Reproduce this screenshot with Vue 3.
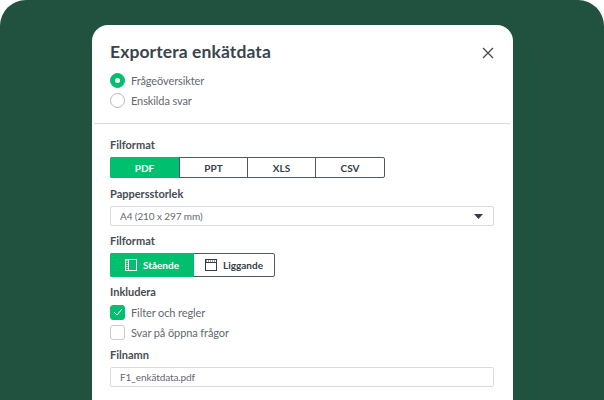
<script setup>
const formats = ['PDF', 'PPT', 'XLS', 'CSV']
</script>

<template>
  <div class="stage">
    <section class="card">
      <header class="head">
        <div class="title-row">
          <h1 class="title">Exportera enkätdata</h1>
          <svg class="close" width="12" height="12" viewBox="0 0 12 12"><path d="M1 1l10 10M11 1L1 11" stroke="#4a4f55" stroke-width="1.4" fill="none"/></svg>
        </div>
        <div class="radios">
          <div class="opt"><span class="radio on"><i></i></span><span>Frågeöversikter</span></div>
          <div class="opt"><span class="radio"></span><span>Enskilda svar</span></div>
        </div>
      </header>
      <div class="rule"></div>
      <div class="body">
        <div class="label l1">Filformat</div>
        <div class="seg">
          <div v-for="(f, i) in formats" :key="f" class="seg-item" :class="{ active: i === 0 }">{{ f }}</div>
        </div>
        <div class="label l2">Pappersstorlek</div>
        <div class="field select">
          <span>A4 (210 x 297 mm)</span>
          <svg width="9" height="5" viewBox="0 0 9 5"><path d="M0 0h9L4.500 5z" fill="#333e48"/></svg>
        </div>
        <div class="label l3">Filformat</div>
        <div class="seg seg2">
          <div class="seg-item active">
            <svg width="12" height="12" viewBox="0 0 12 12" fill="none" stroke="#fff" stroke-width="1"><rect x=".5" y=".5" width="11" height="11"/><path d="M3.500 .5v11"/><path d="M2 1v10" stroke-dasharray="1 1"/></svg>
            <span>Stående</span>
          </div>
          <div class="seg-item">
            <svg width="12" height="12" viewBox="0 0 12 12" fill="none" stroke="#333e48" stroke-width="1"><rect x=".5" y=".5" width="11" height="11"/><path d="M.5 3.500h11"/><path d="M1 2h10" stroke-dasharray="1 1"/></svg>
            <span>Liggande</span>
          </div>
        </div>
        <div class="label l4">Inkludera</div>
        <div class="checks">
          <div class="opt"><span class="check on"><svg width="10" height="8" viewBox="0 0 10 8"><path d="M1 4l3 3 5-6" stroke="#fff" stroke-width="1" fill="none"/></svg></span><span>Filter och regler</span></div>
          <div class="opt"><span class="check"></span><span>Svar på öppna frågor</span></div>
        </div>
        <div class="label l5">Filnamn</div>
        <div class="field name">F1_enkätdata.pdf</div>
      </div>
    </section>
  </div>
</template>

<style scoped>
.stage {
  width: 604px;
  height: 400px;
  box-sizing: border-box;
  padding: 25px 91px 0 92px;
  background: #21523f;
  border-radius: 26px 26px 0 0;
  overflow: hidden;
  font-family: "Lato", sans-serif;
  color: #333e48;
}
.card {
  background: #fff;
  height: 375px;
  border-radius: 16px 16px 0 0;
}
.head {
  height: 98px;
  box-sizing: border-box;
  padding: 15px 19px 0 18px;
}
.rule {
  height: 1px;
  margin: 0 3px 0 2px;
  background: #d9dbdc;
}
.title-row {
  display: flex;
  justify-content: space-between;
  align-items: center;
  height: 24px;
}
.close { margin-top: 2px; }
.title {
  margin: 0;
  font-size: 17.500px;
  line-height: 24px;
  font-weight: 700;
  color: #3a444d;
  letter-spacing: 0.1px;
}
.radios { margin-top: 6px; }
.opt {
  display: flex;
  align-items: center;
  gap: 6px;
  height: 20px;
  font-size: 11px;
  color: #62696f;
  letter-spacing: -0.1px;
}
.radio {
  width: 15px;
  height: 15px;
  box-sizing: border-box;
  border-radius: 50%;
  border: 1px solid #b5b9bc;
  display: flex;
  align-items: center;
  justify-content: center;
}
.radio.on { background: #00bf6f; border-color: #00bf6f; }
.radio i { width: 5px; height: 5px; border-radius: 50%; background: #fff; }
.body { padding: 0 19px 0 18px; }
.label {
  font-size: 11px;
  font-weight: 700;
  line-height: 16px;
  color: #454d54;
}
.l1 { padding-top: 13px; }
.l2 { margin-top: 8px; }
.l3 { margin-top: 7px; }
.l4 { margin-top: 7px; }
.l5 { margin-top: 5px; }
.seg {
  display: flex;
  width: 275px;
  height: 21px;
  margin-top: 4px;
  box-sizing: border-box;
  border: 1px solid #51585e;
  border-radius: 2px;
}
.seg2 { width: 165px; height: 24px; margin-top: 4px; }
.seg-item {
  flex: none;
  width: 68px;
  display: flex;
  align-items: center;
  justify-content: center;
  gap: 6px;
  font-size: 10px;
  font-weight: 700;
  color: #333e48;
  box-sizing: border-box;
}
.seg-item + .seg-item { border-left: 1px solid #51585e; }
.seg-item:last-child { flex: 1; }
.seg-item.active {
  width: 69px;
  margin: -1px 0 -1px -1px;
  border-radius: 2px 0 0 2px;
  background: #00bf6f;
  color: #fff;
}
.seg2 .seg-item { width: 83px; }
.seg2 .seg-item.active { width: 84px; }
.seg2 .seg-item + .seg-item { border-left: 0; }
.field {
  height: 20px;
  margin-top: 4px;
  box-sizing: border-box;
  border: 1px solid #d9dbdc;
  border-radius: 2px;
  padding: 0 9px;
  display: flex;
  align-items: center;
  font-size: 10px;
  color: #62696f;
  letter-spacing: -0.1px;
}
.select { justify-content: space-between; padding-right: 10px; }
.checks { margin-top: 2px; }
.check {
  width: 15px;
  height: 15px;
  box-sizing: border-box;
  border: 1px solid #c9cccf;
  border-radius: 3px;
  display: flex;
  align-items: center;
  justify-content: center;
}
.check.on { background: #00bf6f; border-color: #00bf6f; }
</style>

<style>
html, body { background: #fff; }
</style>
